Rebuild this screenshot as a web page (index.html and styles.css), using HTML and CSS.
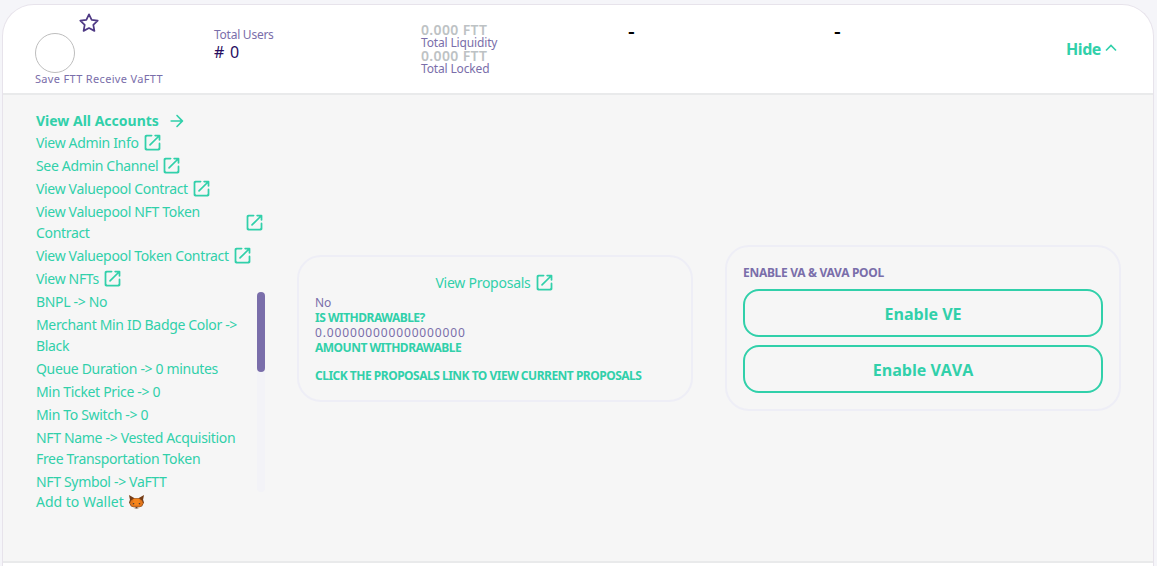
FILE: index.html
```html
<!DOCTYPE html>
<html lang="en">
<head>
<meta charset="utf-8">
<title>Valuepool</title>
<link rel="stylesheet" href="styles.css">
</head>
<body>
<svg class="defs" width="0" height="0" aria-hidden="true">
  <symbol id="open" viewBox="0 0 24 24"><path d="M18 19H6C5.45 19 5 18.55 5 18V6C5 5.45 5.45 5 6 5H11C11.55 5 12 4.55 12 4C12 3.45 11.55 3 11 3H5C3.89 3 3 3.9 3 5V19C3 20.1 3.9 21 5 21H19C20.1 21 21 20.1 21 19V13C21 12.45 20.55 12 20 12C19.45 12 19 12.45 19 13V18C19 18.55 18.55 19 18 19ZM14 4C14 4.55 14.45 5 15 5H17.59L8.46 14.13C8.07 14.52 8.07 15.15 8.46 15.54C8.85 15.93 9.48 15.93 9.87 15.54L19 6.41V9C19 9.55 19.45 10 20 10C20.55 10 21 9.55 21 9V4C21 3.45 20.55 3 20 3H15C14.45 3 14 3.45 14 4Z"/></symbol>
</svg>
<main class="card">
  <header class="head">
    <div class="cell-token">
      <svg class="star" viewBox="0 0 24 24"><path d="M12 2.6l2.9 6 6.6.9-4.8 4.6 1.2 6.5-5.900-3.100-5.900 3.100 1.200-6.500-4.800-4.600 6.600-.9z"/></svg>
      <div class="avatar"></div>
      <div class="sub">Save FTT Receive VaFTT</div>
    </div>
    <div class="cell-users">
      <div class="sub12">Total Users</div>
      <div class="count"># 0</div>
    </div>
    <div class="cell-liq">
      <div class="amt">0.000 FTT</div>
      <div class="sub12 tight">Total Liquidity</div>
      <div class="amt">0.000 FTT</div>
      <div class="sub12 tight">Total Locked</div>
    </div>
    <div class="cell-dash">-</div>
    <div class="cell-dash">-</div>
    <div class="cell-hide">Hide
      <svg class="chev" viewBox="0 0 24 24"><path d="M6 15l6-6 6 6"/></svg>
    </div>
  </header>
  <section class="body">
    <div class="col-left">
      <ul class="list">
        <li class="row strong">View All Accounts <svg class="arrow" viewBox="0 0 24 24"><path d="M5 13H16.17L11.29 17.88C10.9 18.27 10.9 18.91 11.29 19.3C11.68 19.69 12.31 19.69 12.7 19.3L19.29 12.71C19.68 12.32 19.68 11.69 19.29 11.3L12.71 4.7C12.32 4.31 11.69 4.31 11.3 4.7C10.91 5.09 10.91 5.72 11.3 6.11L16.17 11H5C4.45 11 4 11.45 4 12C4 12.55 4.45 13 5 13Z"/></svg></li>
        <li class="row">View Admin Info <svg class="ico"><use href="#open"/></svg></li>
        <li class="row">See Admin Channel <svg class="ico"><use href="#open"/></svg></li>
        <li class="row">View Valuepool Contract <svg class="ico"><use href="#open"/></svg></li>
        <li class="row split"><span class="wrap">View Valuepool NFT Token Contract</span> <svg class="ico"><use href="#open"/></svg></li>
        <li class="row">View Valuepool Token Contract <svg class="ico"><use href="#open"/></svg></li>
        <li class="row">View NFTs <svg class="ico"><use href="#open"/></svg></li>
        <li class="row">BNPL -&gt; No</li>
        <li class="row"><span class="wrap">Merchant Min ID Badge Color -&gt; Black</span></li>
        <li class="row">Queue Duration -&gt; 0 minutes</li>
        <li class="row">Min Ticket Price -&gt; 0</li>
        <li class="row">Min To Switch -&gt; 0</li>
        <li class="row"><span class="wrap">NFT Name -&gt; Vested Acquisition Free Transportation Token</span></li>
        <li class="row">NFT Symbol -&gt; VaFTT</li>
      </ul>
      <div class="wallet">Add to Wallet
        <svg class="fox" viewBox="0 0 16 16">
          <path fill="#763d16" d="M0 0l6 3.500h4l6-3.500-1 5 1 3-2 4-3 1H5l-3-1-2-4 1-3z"/>
          <path fill="#e2761b" d="M2 6l3-2h6l3 2 1 3-2 3-2 .5H5L3 12 1 9z"/>
          <path fill="#f6851b" d="M5 4h6l.8 4-1.800 3H6L4.200 8z"/>
          <path fill="#233447" d="M4 8.500l2 .5-1.500 1zM12 8.500l-2 .5 1.500 1z"/>
          <path fill="#d7c1b3" d="M5 12.500l2 .5h2l2-.5-1 2.500H6z"/>
          <path fill="#3a2a20" d="M7 13h2v1.200H7z"/>
        </svg>
      </div>
      <div class="scroll-track"><div class="scroll-thumb"></div></div>
    </div>
    <div class="panel panel-a">
      <div class="proposal-link">View Proposals <svg class="ico"><use href="#open"/></svg></div>
      <div class="val">No</div>
      <div class="lab">IS WITHDRAWABLE?</div>
      <div class="val num">0.000000000000000000</div>
      <div class="lab">AMOUNT WITHDRAWABLE</div>
      <div class="lab note">CLICK THE PROPOSALS LINK TO VIEW CURRENT PROPOSALS</div>
    </div>
    <div class="panel panel-b">
      <div class="title">ENABLE VA &amp; VAVA POOL</div>
      <button class="btn" type="button">Enable VE</button>
      <button class="btn" type="button">Enable VAVA</button>
    </div>
  </section>
  <footer class="foot"></footer>
</main>
</body>
</html>
```

FILE: styles.css
```css
* { box-sizing: border-box; }
html, body { margin: 0; height: 566px; overflow: hidden; }
body {
  background: #f5f5f9;
  padding: 4px 3px 0 2px;
  font-family: "Noto Sans", "Liberation Sans", sans-serif;
  color: #31d0aa;
}
.defs { position: absolute; }
.card {
  height: 562px;
  border: 1px solid #e7e3eb;
  border-bottom: 0;
  border-radius: 32px 32px 0 0;
  background: #fff;
  overflow: hidden;
}
.head {
  height: 90px;
  border-bottom: 2px solid #e9eaeb;
  display: grid;
  grid-template-columns: 179px 207px 207px 206px 1fr 120px;
  padding: 0 34px 0 32px;
}
.cell-token { display: flex; flex-direction: column; padding-top: 7px; }
.star { width: 22px; height: 22px; margin: 0 0 -1px 43px; fill: none; stroke: #4f3a85; stroke-width: 1.9; stroke-linejoin: round; }
.avatar { width: 40px; height: 40px; border: 1px solid #bdbdbd; border-radius: 50%; background: #fff; }
.sub { font-size: 11px; line-height: 12px; color: #7a6eaa; white-space: nowrap; letter-spacing: .33px; }
.cell-users { padding-top: 22px; }
.sub12 { font-size: 12px; line-height: 16px; color: #7a6eaa; letter-spacing: -.25px; }
.count { font-size: 16px; line-height: 18px; color: #280d5f; letter-spacing: .8px; }
.cell-liq { padding-top: 18px; }
.amt { font-size: 14px; line-height: 13px; font-weight: 600; color: #bdc2c4; letter-spacing: .35px; }
.tight { line-height: 13px; letter-spacing: -.15px; }
.cell-dash { padding-top: 14px; font-size: 21px; line-height: 24px; color: #000; font-weight: 500; }
.cell-hide { display: flex; align-items: center; justify-content: flex-end; gap: 0; font-size: 16px; font-weight: 700; letter-spacing: -.4px; }
.chev { width: 20px; height: 20px; margin: 0 -2px 2px 0; fill: none; stroke: #31d0aa; stroke-width: 2; }
.body {
  height: 466px;
  background: #f6f6f6;
  display: grid;
  grid-template-columns: 230px 396px 396px;
  column-gap: 32px;
  padding: 0 32px;
  align-items: center;
}
.col-left { position: relative; align-self: start; padding: 14px 0 0 1px; }
.list { list-style: none; margin: 0; padding: 0; }
.row {
  font-size: 14px;
  line-height: 21px;
  margin-bottom: 2px;
  display: flex;
  align-items: center;
  gap: 3px;
  white-space: nowrap;
  letter-spacing: -.33px;
}
.wrap { white-space: normal; }
.split { justify-content: space-between; }
.strong { font-weight: 700; letter-spacing: 0; margin: 1px 0; }
.ico { width: 21px; height: 21px; fill: #31d0aa; flex: none; }
.arrow { width: 20px; height: 20px; fill: #31d0aa; margin-left: 5px; }
.wallet { font-size: 14px; line-height: 18px; display: flex; align-items: center; gap: 5px; margin-top: -1px; }
.fox { width: 15px; height: 15px; }
.scroll-track { position: absolute; left: 222px; top: 197px; width: 8px; height: 200px; background: #f3f3f7; border-radius: 8px; }
.scroll-thumb { width: 8px; height: 80px; background: #7a6eaa; border-radius: 8px; }
.panel {
  border: 2px solid #eeeef6;
  border-radius: 24px;
  padding: 16px;
}
.panel-a { height: 147px; padding-top: 14px; }
.proposal-link { display: flex; justify-content: center; align-items: center; gap: 3px; font-size: 14px; line-height: 24px; letter-spacing: -.25px; }
.val { font-size: 12px; line-height: 15.3px; color: #7a6eaa; }
.num { letter-spacing: .85px; }
.lab { font-size: 12px; line-height: 15.3px; font-weight: 700; color: #31d0aa; letter-spacing: -.5px; }
.note { margin-top: 12px; }
.panel-b { height: 166px; padding-top: 16px; }
.title { font-size: 12px; line-height: 20px; font-weight: 700; color: #7a6eaa; margin-bottom: 6px; letter-spacing: -.3px; }
.btn {
  display: block;
  width: 100%;
  height: 48px;
  border: 2px solid #31d0aa;
  border-radius: 16px;
  background: transparent;
  color: #31d0aa;
  font: 700 16px "Open Sans", sans-serif;
  padding: 2px 0 0;
  margin-bottom: 8px;
}
.foot { height: 6px; background: #fff; border-top: 2px solid #e9eaeb; }
```
